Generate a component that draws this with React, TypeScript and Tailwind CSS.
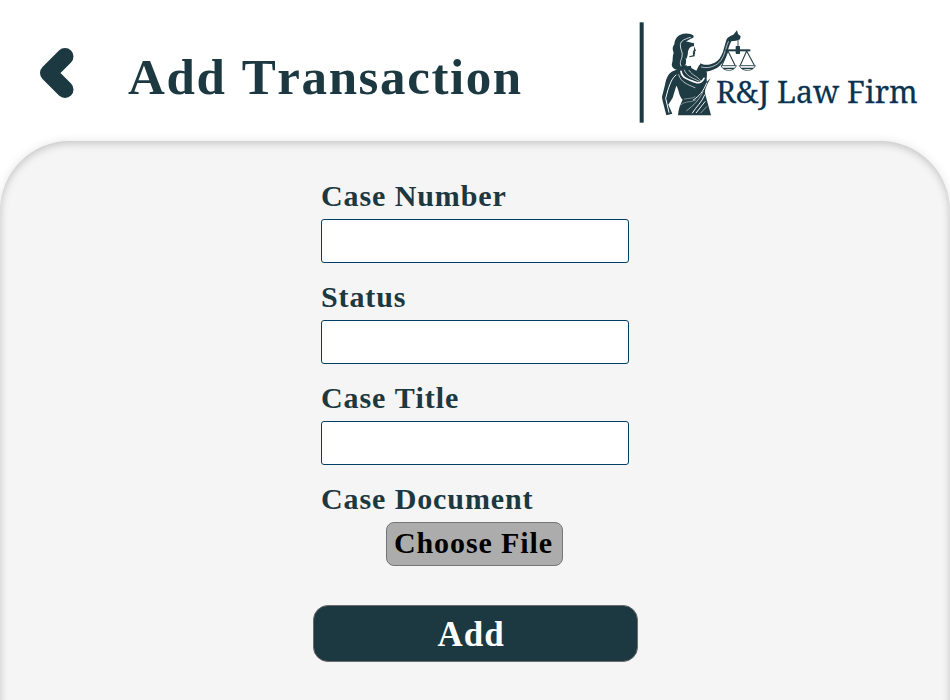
import React from "react";

function Logo() {
  return (
    <svg className="block h-[120px] w-[300px]" viewBox="0 0 900 360" role="img" aria-label="R&J Law Firm">
      <rect x="29" y="37" width="12" height="301" fill="#1c3840" />
      <g fill="#1f3b44">
        {/* hair */}
        <path d="M191 77C181 69 165 69 151 74C139 79 134 91 133 103C126 113 128 119 131 128C127 138 129 149 127 157C121 169 132 181 145 179C160 175 171 166 168 149C164 137 160 130 159 117C160 101 168 91 190 83Z" />
        {/* blindfold and shaded side of the face */}
        <path d="M158 97C168 91 179 97 192 100L192 109C182 109 178 113 174 124C174 133 172 143 168 148C160 137 156 116 158 97Z" />
        <path d="M192 109L198 122L194 125L196 130L194 133L194 139L178 142L178 139L189 136L189 130L187 129L191 126L188 124L192 121Z" />
        {/* raised arm */}
        <path d="M211 160C226 168 241 164 254 158C267 151 274 139 279 125L289 90C291 82 300 78 310 74L321 61L324 72L332 79L330 88L318 92L304 94C297 106 294 122 287 141C281 158 267 174 247 180C233 186 218 187 207 181Z" />
        {/* torso and gown */}
        <path d="M169 165L182 163L184 174L199 182L208 164L224 177C237 187 227 204 231 215L242 204C233 221 224 235 225 250L243 316L144 316C145 297 151 282 158 269C146 257 148 242 139 227L128 263L115 284L127 311L109 316L97 269L96 260L105 224C109 203 116 187 132 182Z" />
      </g>
      <g fill="none" stroke="#fff" strokeLinecap="round">
        <path d="M181 82C163 88 153 91 151 104C150 119 160 127 156 141C153 152 148 157 153 168" strokeWidth="2.4" />
        <path d="M170 151H183L184 167L170 169Z" fill="#fff" stroke="none" />
        <path d="M138 195C126 205 121 218 114 239L107 265L117 307" strokeWidth="3" />
        <path d="M153 184C156 206 181 211 195 216C210 223 217 214 222 205" strokeWidth="5" />
        <path d="M163 180C170 200 187 203 206 213M177 181C188 198 204 199 212 213" strokeWidth="2" />
        <path d="M146 194C152 218 175 224 195 233" strokeWidth="2" />
        <path d="M163 267C177 264 187 267 195 260M152 285C166 272 183 278 198 270" strokeWidth="1.2" />
        <path d="M230 219C219 247 207 258 190 270M224 255C215 278 200 288 187 309M225 275L199 308" strokeWidth="2.8" />
        <path d="M219 245C208 270 191 286 170 302M230 290L212 309" strokeWidth="1.6" />
        <path d="M214 171C237 178 263 166 273 151C286 133 287 111 295 95" strokeWidth="2" />
      </g>
      {/* balance */}
      <g fill="none" stroke="#1f3b44" strokeWidth="2.6">
        <path d="M324 75V113" />
        <path d="M286 121H361" strokeWidth="6" />
        <path d="M294 123L276 166M294 123L315 166M350 123L331 166M350 123L373 166" strokeWidth="3.2" />
        <path d="M273 167H319C314 178 305 181 296 181C286 181 277 177 273 167ZM328 167H376C371 178 361 181 352 181C341 181 333 177 328 167Z" />
        <path d="M280 175H312M335 175H369" strokeWidth="4" />
      </g>
      <rect x="317" y="108" width="13" height="24" rx="2" fill="#1f3b44" />
      <text
        x="258"
        y="278"
        fill="#0b3350"
        stroke="#0b3350"
        strokeWidth="0.8"
        fontSize="91"
        fontWeight="400"
        textLength="605"
        lengthAdjust="spacingAndGlyphs"
        fontFamily="'Noto Serif', 'DejaVu Serif', serif"
      >
        R&amp;J Law Firm
      </text>
    </svg>
  );
}

function Field({ label }: { label: string }) {
  return (
    <label className="flex h-[101px] flex-col">
      <span className="h-[43px] pt-[3px] leading-[34px]">{label}</span>
      <input className="h-11 w-full rounded-[3px] border border-[#003f63] bg-white px-2 outline-none" />
    </label>
  );
}

export default function App() {
  return (
    <div className="flex h-[700px] w-[950px] flex-col overflow-hidden bg-white font-['Liberation_Serif',serif] font-bold text-[#1c3840] [font-kerning:none]">
      <header className="flex h-[141px] shrink-0 items-start">
        <button className="ml-[40px] mt-[47px] h-[52px] w-[34px]" aria-label="Back">
          <svg className="block h-[52px] w-[34px]" viewBox="0 0 34 52">
            <path d="M25 9.5L8.5 26L25 42.5" fill="none" stroke="#1c3840" strokeWidth="17" strokeLinecap="round" strokeLinejoin="round" />
          </svg>
        </button>
        <h1 className="ml-[54px] mt-[49px] w-[502px] whitespace-nowrap text-[51px] leading-[57px] tracking-[1.6px] [word-spacing:1px]">Add Transaction</h1>
        <div className="mt-[10px] shrink-0">
          <Logo />
        </div>
      </header>
      <main className="h-[600px] shrink-0 rounded-t-[70px] bg-[#f5f5f5] pt-[35px] shadow-[0_0_10px_rgba(0,0,0,0.1),inset_0_2px_8px_rgba(0,0,0,0.22)]">
        <form className="mx-auto flex w-[308px] flex-col text-[30px] tracking-[0.9px]">
          <Field label="Case Number" />
          <Field label="Status" />
          <Field label="Case Title" />
          <span className="h-[43px] pt-[3px] leading-[34px]">Case Document</span>
          <button type="button" className="ml-[65px] flex h-11 w-[177px] justify-center whitespace-nowrap rounded-lg border border-[#767676] bg-[#acacac] pr-[2px] text-[30px] leading-[40px] tracking-[0.9px] text-black">
            Choose File
          </button>
          <button type="button" className="-ml-2 mt-[39px] flex h-[57px] w-[325px] justify-center rounded-[15px] border border-[#6b6b6b] bg-[#1c3840] pr-[9px] pt-px text-[35px] leading-[55px] tracking-[1px] text-white">
            Add
          </button>
        </form>
      </main>
    </div>
  );
}
